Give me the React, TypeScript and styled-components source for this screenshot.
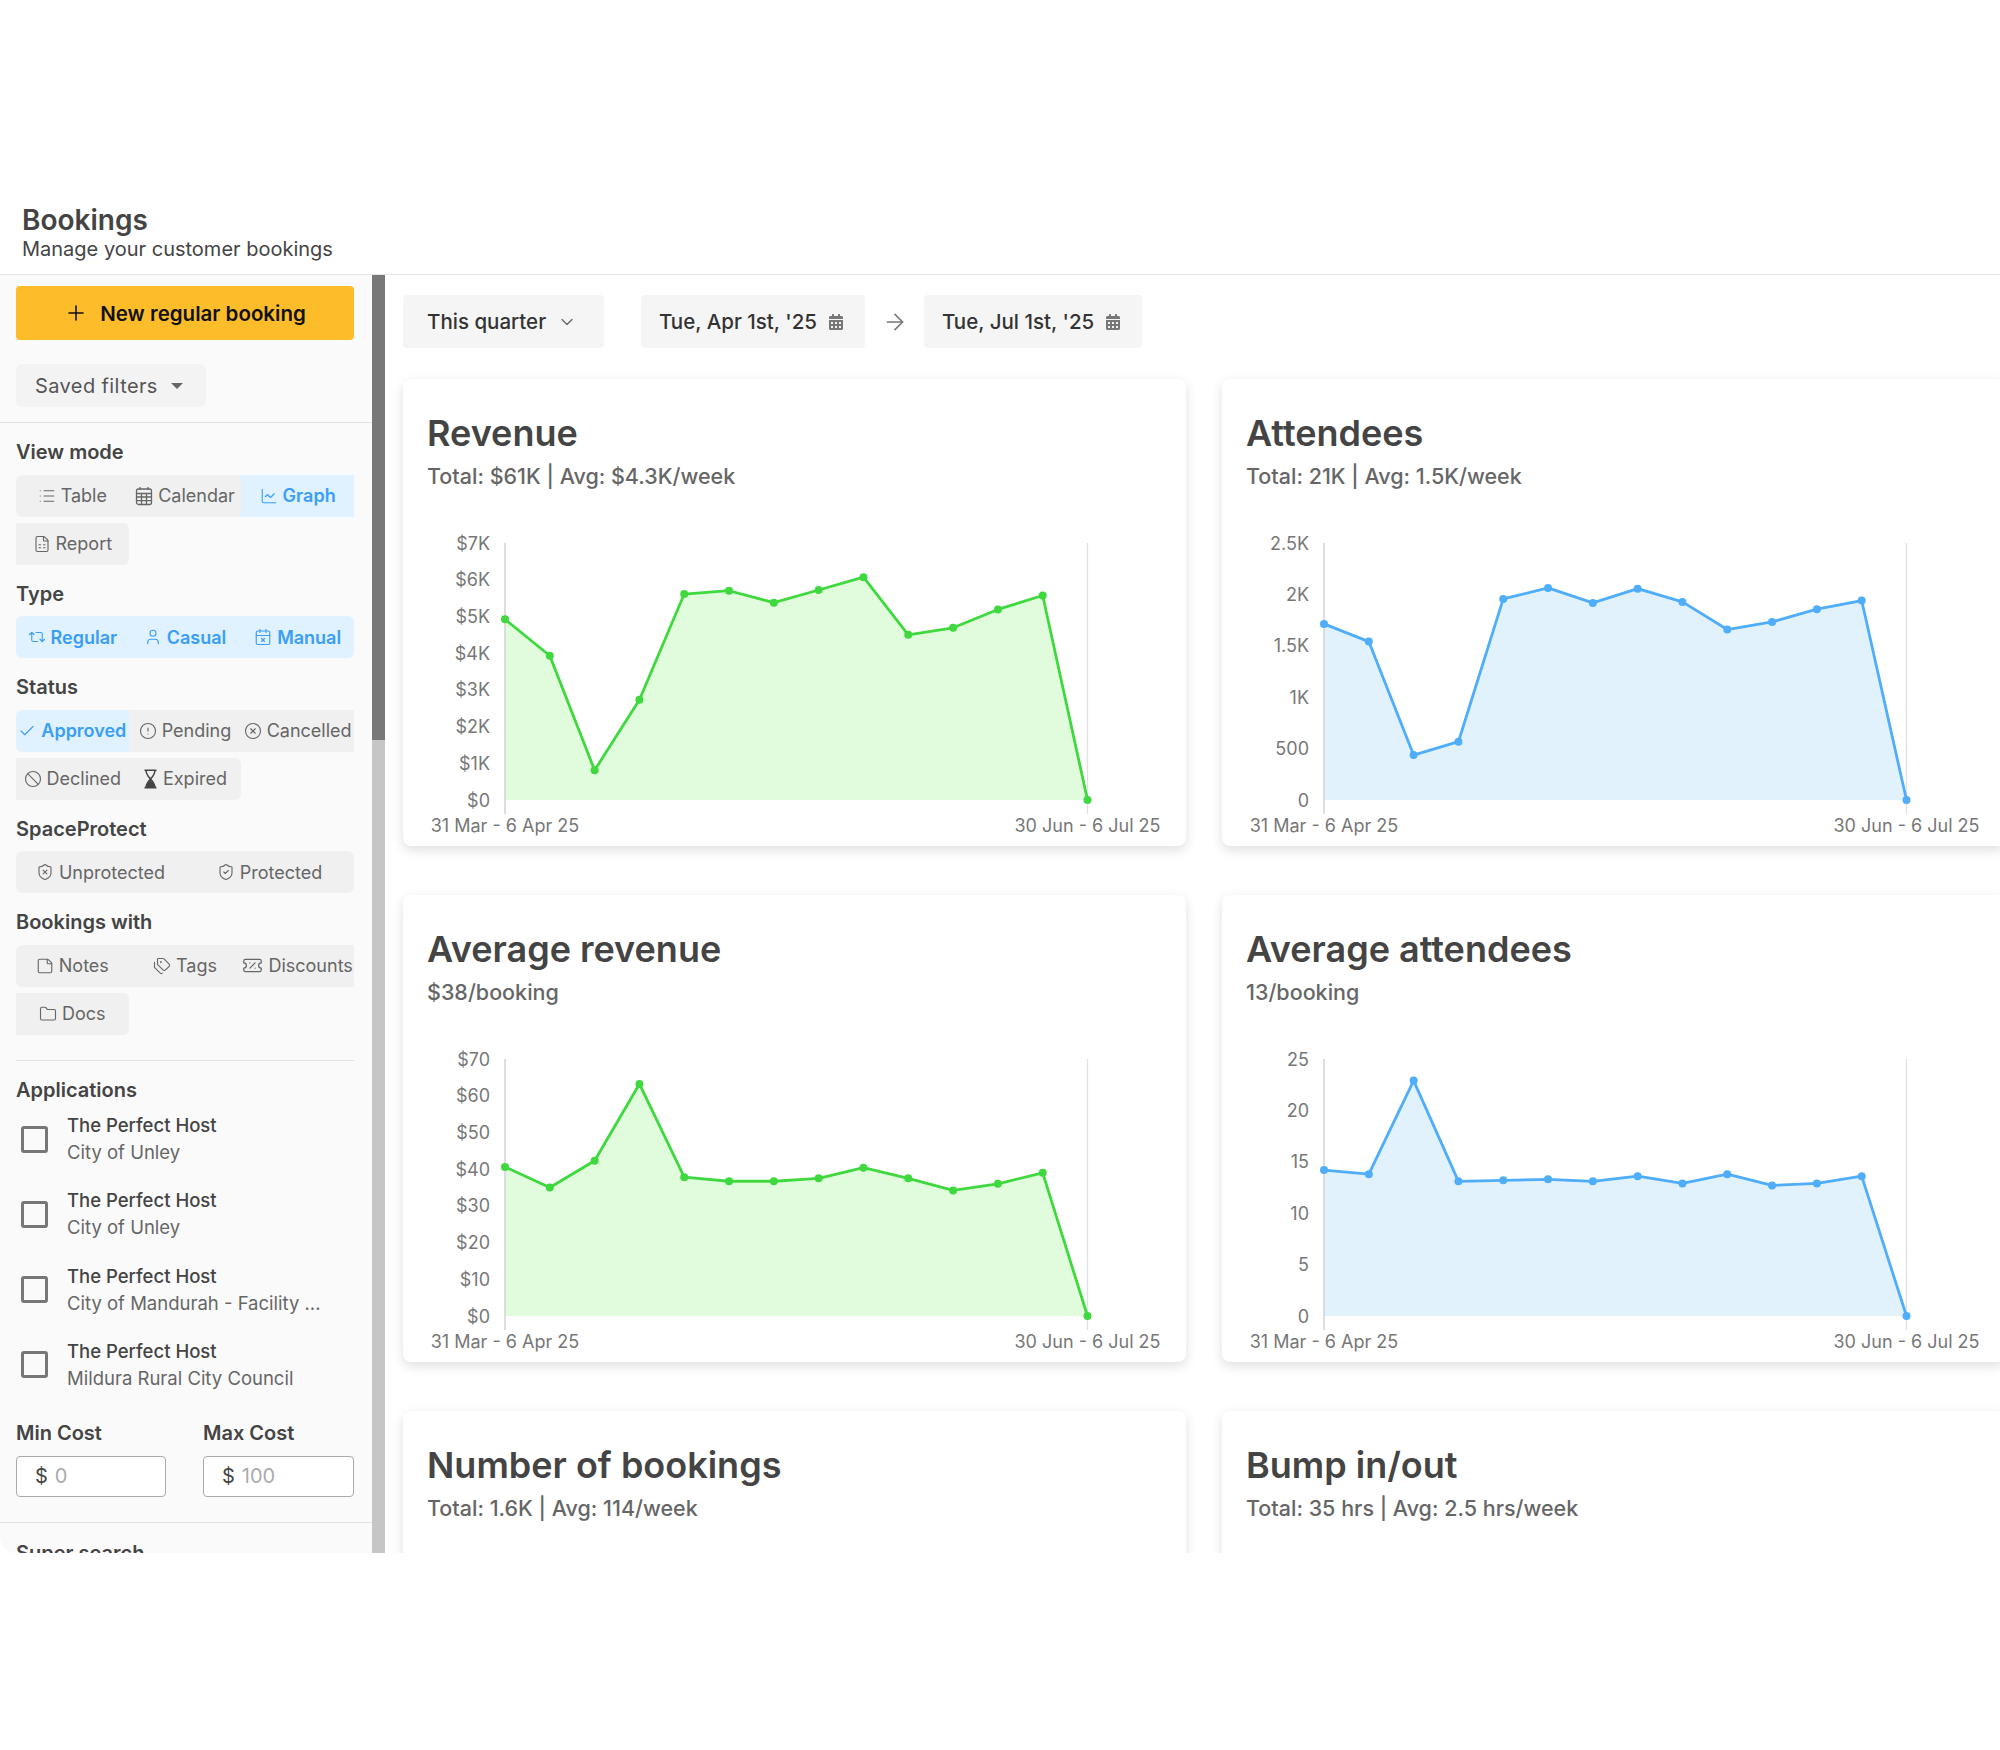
import React from "react";
import styled, { createGlobalStyle } from "styled-components";
import {
  Ban,
  ArrowRight,
  ChartLine,
  Check,
  ChevronDown,
  CircleAlert,
  CircleUserRound,
  CircleX,
  FileSpreadsheet,
  Folder,
  List,
  Plus,
  Repeat2,
  ShieldCheck,
  ShieldX,
  StickyNote,
  Tags,
  TicketPercent,
  User,
  CalendarX,
} from "lucide-react";
import { FaCalendarAlt } from "react-icons/fa";

const GlobalStyle = createGlobalStyle`
  html, body {
    margin: 0;
    background: #fff;
    font-family: Inter, "Liberation Sans", sans-serif;
    overflow: hidden;
  }
  * { box-sizing: border-box; }
`;

const Page = styled.div`
  width: 2000px;
  height: 1750px;
  padding-top: 200px;
  overflow: hidden;
`;

const Header = styled.header`
  height: 75px;
  padding: 4px 22px 0;
  border-bottom: 1px solid #e4e4e4;
`;

const PageTitle = styled.h1`
  margin: 0;
  font-size: 28px;
  line-height: 32px;
  font-weight: 600;
  color: #444;
`;

const PageSub = styled.div`
  font-size: 20px;
  line-height: 26px;
  color: #444;
`;

const Shell = styled.div`
  display: flex;
  height: 1278px;
  overflow: hidden;
`;

const Sidebar = styled.aside`
  width: 372px;
  flex: none;
  padding-top: 11px;
  background: #fafafa;
  border-bottom-left-radius: 16px;
  overflow: hidden;
`;

const Pad = styled.div`
  padding: 0 18px 0 16px;
`;

const NewButton = styled.button`
  display: flex;
  align-items: center;
  justify-content: center;
  gap: 12px;
  width: 100%;
  height: 54px;
  border: 0;
  border-radius: 4px;
  background: #fdbd2a;
  color: #111;
  font: 600 20.5px Inter, sans-serif;
`;

const SavedFilters = styled.button`
  display: flex;
  align-items: center;
  gap: 13px;
  width: 190px;
  height: 43px;
  margin-top: 24px;
  padding: 0 19px;
  border: 0;
  border-radius: 6px;
  background: #f3f3f3;
  color: #555;
  font: 400 20px Inter, sans-serif;
  letter-spacing: 0.4px;
`;

const Caret = styled.span`
  width: 0;
  height: 0;
  border-left: 6px solid transparent;
  border-right: 6px solid transparent;
  border-top: 6px solid #666;
`;

const Divider = styled.div<{ $inset?: boolean }>`
  height: 1px;
  background: #e2e2e2;
  margin: ${(p) => (p.$inset ? "25px 18px 0 16px" : "0")};
`;

const Group = styled.section`
  padding-top: 17px;
`;

const GroupLabel = styled.div`
  font-size: 20px;
  line-height: 24px;
  font-weight: 600;
  color: #444;
  margin-bottom: 10.5px;
`;

const Segments = styled.div`
  display: flex;
  flex-wrap: wrap;
  row-gap: 6px;
`;

const Segment = styled.div<{ $active?: boolean; $cols?: number }>`
  flex: 0 0 ${(p) => 100 / (p.$cols ?? 3)}%;
  display: flex;
  align-items: center;
  justify-content: center;
  gap: 5px;
  height: 42px;
  font-size: 18px;
  font-weight: ${(p) => (p.$active ? 600 : 400)};
  color: ${(p) => (p.$active ? "#3a9ef5" : "#666")};
  background: ${(p) => (p.$active ? "#e0f1ff" : "#f0f0f0")};
  white-space: nowrap;

  &:first-child {
    border-radius: 6px 0 0 6px;
  }
  &:last-child {
    border-radius: 0 6px 6px 0;
  }
  &:first-child:last-child {
    border-radius: 0 6px 6px 0;
  }
  svg {
    flex: none;
  }
`;

const AppRow = styled.div`
  display: flex;
  align-items: center;
  gap: 19px;
  padding-left: 5px;
  margin-bottom: 21.3px;
`;

const Box = styled.span`
  width: 27px;
  height: 27px;
  flex: none;
  border: 3px solid #777;
  border-radius: 3px;
`;

const AppText = styled.div`
  min-width: 0;
  font-size: 18.5px;
  line-height: 27px;
`;

const AppName = styled.div`
  font-weight: 500;
  color: #444;
`;

const AppPlace = styled.div`
  color: #666;
  white-space: nowrap;
`;

const CostRow = styled.div`
  display: grid;
  grid-template-columns: 150px 151px;
  justify-content: space-between;
  padding-top: 8px;
`;

const CostInput = styled.label`
  display: flex;
  align-items: center;
  gap: 7px;
  height: 41px;
  padding-left: 18px;
  border: 1px solid #aaa;
  border-radius: 4px;
  background: #fff;
  font-size: 20px;
  color: #444;

  input {
    width: 80px;
    padding: 0;
    border: 0;
    outline: 0;
    background: transparent;
    font: 400 20px Inter, sans-serif;
  }
  input::placeholder {
    color: #aaa;
  }
`;

const ClippedLabel = styled(GroupLabel)`
  padding: 18px 0 0 16px;
  margin: 0;
`;

const ScrollTrack = styled.div`
  width: 13px;
  flex: none;
  background: #c6c6c6;
`;

const ScrollThumb = styled.div`
  height: 465px;
  background: #787878;
`;

const Main = styled.main`
  flex: 1;
  min-width: 0;
  padding: 20px 0 0 18px;
  overflow: hidden;
`;

const Toolbar = styled.div`
  display: flex;
  align-items: center;
  height: 53px;
`;

const ToolButton = styled.div<{ $width: number }>`
  display: flex;
  align-items: center;
  width: ${(p) => p.$width}px;
  height: 53px;
  padding-left: ${(p) => (p.$width > 210 ? 18 : 24)}px;
  gap: 11px;
  border-radius: 4px;
  background: #f5f5f5;
  color: #333;
  font-size: 20.5px;
  font-weight: 500;
  white-space: nowrap;
`;

const ArrowSlot = styled.div`
  width: 59px;
  display: flex;
  justify-content: center;
  color: #777;
`;

const QuarterGap = styled.div`
  width: 37px;
`;

const CardGrid = styled.div`
  display: grid;
  grid-template-columns: 783px 783px;
  gap: 49px 36px;
  margin-top: 31px;
`;

const Card = styled.article`
  height: 467px;
  padding-top: 32px;
  border-radius: 8px;
  background: #fff;
  box-shadow: 0 4px 12px rgba(0, 0, 0, 0.13);
`;

const CardTitle = styled.h2`
  margin: 0;
  padding-left: 24px;
  font-size: 36px;
  line-height: 44px;
  font-weight: 600;
  color: #444;
`;

const CardSub = styled.div`
  margin-top: 7px;
  padding-left: 24px;
  font-size: 21.5px;
  line-height: 28px;
  font-weight: 500;
  color: #666;
`;

const ChartSvg = styled.svg`
  display: block;
`;

const AxisText = styled.text`
  font-family: Inter, sans-serif;
  font-size: 18px;
  fill: #777;
`;

type Chart = { ticks: string[]; max: number; color: string; fill: string; data: number[] };

const green = { color: "#3fd93f", fill: "#e0fcdc" };
const blue = { color: "#4fadfa", fill: "#e1f2fd" };

const cards: { title: string; sub: string; chart?: Chart }[] = [
  {
    title: "Revenue",
    sub: "Total: $61K | Avg: $4.3K/week",
    chart: {
      ...green,
      ticks: ["$0", "$1K", "$2K", "$3K", "$4K", "$5K", "$6K", "$7K"],
      max: 7,
      data: [4.92, 3.93, 0.81, 2.73, 5.61, 5.7, 5.375, 5.72, 6.07, 4.5, 4.69, 5.19, 5.57, 0],
    },
  },
  {
    title: "Attendees",
    sub: "Total: 21K | Avg: 1.5K/week",
    chart: {
      ...blue,
      ticks: ["0", "500", "1K", "1.5K", "2K", "2.5K"],
      max: 2500,
      data: [1713, 1541, 437, 567, 1956, 2063, 1917, 2056, 1927, 1658, 1732, 1856, 1940, 0],
    },
  },
  {
    title: "Average revenue",
    sub: "$38/booking",
    chart: {
      ...green,
      ticks: ["$0", "$10", "$20", "$30", "$40", "$50", "$60", "$70"],
      max: 70,
      data: [40.6, 35, 42.3, 63.2, 37.8, 36.7, 36.7, 37.5, 40.4, 37.5, 34.2, 36, 39, 0],
    },
  },
  {
    title: "Average attendees",
    sub: "13/booking",
    chart: {
      ...blue,
      ticks: ["0", "5", "10", "15", "20", "25"],
      max: 25,
      data: [14.2, 13.8, 22.9, 13.1, 13.2, 13.3, 13.1, 13.6, 12.9, 13.8, 12.7, 12.9, 13.6, 0],
    },
  },
  { title: "Number of bookings", sub: "Total: 1.6K | Avg: 114/week" },
  { title: "Bump in/out", sub: "Total: 35 hrs | Avg: 2.5 hrs/week" },
];

const LEFT = 102;
const RIGHT = 684.5;
const TOP = 53;
const BOTTOM = 310;

function LineChart({ chart }: { chart: Chart }) {
  const step = (RIGHT - LEFT) / (chart.data.length - 1);
  const pts = chart.data.map((v, i) => ({
    x: LEFT + i * step,
    y: BOTTOM - (v / chart.max) * (BOTTOM - TOP),
  }));
  const line = pts.map((p) => `${p.x},${p.y}`).join(" ");
  return (
    <ChartSvg width={783} height={356}>
      <polygon points={`${LEFT},${BOTTOM} ${line} ${RIGHT},${BOTTOM}`} fill={chart.fill} />
      <line x1={LEFT} x2={LEFT} y1={TOP} y2={324} stroke="#ccc" strokeWidth={1.3} />
      <line x1={RIGHT} x2={RIGHT} y1={TOP} y2={324} stroke="#e0e0e0" strokeWidth={1.3} />
      <polyline points={line} fill="none" stroke={chart.color} strokeWidth={2.8} strokeLinejoin="round" />
      {pts.map((p, i) => (
        <circle key={i} cx={p.x} cy={p.y} r={4} fill={chart.color} />
      ))}
      {chart.ticks.map((t, i) => (
        <AxisText
          key={t}
          x={87}
          y={BOTTOM - (i / (chart.ticks.length - 1)) * (BOTTOM - TOP)}
          textAnchor="end"
          dominantBaseline="central"
        >
          {t}
        </AxisText>
      ))}
      <AxisText x={LEFT} y={335} textAnchor="middle" dominantBaseline="central">
        31 Mar - 6 Apr 25
      </AxisText>
      <AxisText x={RIGHT} y={335} textAnchor="middle" dominantBaseline="central">
        30 Jun - 6 Jul 25
      </AxisText>
    </ChartSvg>
  );
}

function GridCalendar() {
  return (
    <svg width="18" height="20" viewBox="0 0 18 20" fill="none" stroke="currentColor" strokeWidth="1.3">
      <rect x="1.5" y="3" width="15" height="15.5" rx="2" />
      <path d="M5 1v3M13 1v3M1.5 7.5h15M1.5 11h15M1.5 14.7h15M6.5 7.5v11M11.5 7.5v11" />
    </svg>
  );
}

function FilledHourglass() {
  return (
    <svg width="15" height="20" viewBox="0 0 15 20" fill="none" stroke="#444" strokeWidth="1.5">
      <path d="M1.5 1.2h12M1.5 18.8h12M3 1.2c0 4 2 6 4.5 8.8C5 12.8 3 15 3 18.8M12 1.2c0 4-2 6-4.5 8.8 2.5 2.8 4.5 5 4.5 8.8" />
      <path d="M3 18.5c0-3 2-5.500 4.500-7 2.500 1.500 4.500 4 4.500 7z" fill="#444" stroke="none" />
    </svg>
  );
}

const ic = { size: 18, strokeWidth: 1.5 };

function App() {
  return (
    <Page>
      <GlobalStyle />
      <Header>
        <PageTitle>Bookings</PageTitle>
        <PageSub>Manage your customer bookings</PageSub>
      </Header>
      <Shell>
        <Sidebar>
          <Pad>
            <NewButton>
              <Plus size={24} strokeWidth={1.6} />
              New regular booking
            </NewButton>
            <SavedFilters>
              Saved filters
              <Caret />
            </SavedFilters>
          </Pad>
          <Divider style={{ marginTop: 15 }} />
          <Pad>
            <Group>
              <GroupLabel>View mode</GroupLabel>
              <Segments>
                <Segment><List {...ic} />Table</Segment>
                <Segment><GridCalendar />Calendar</Segment>
                <Segment $active><ChartLine {...ic} />Graph</Segment>
                <Segment><FileSpreadsheet {...ic} />Report</Segment>
              </Segments>
            </Group>
            <Group>
              <GroupLabel>Type</GroupLabel>
              <Segments>
                <Segment $active><Repeat2 {...ic} />Regular</Segment>
                <Segment $active><User {...ic} />Casual</Segment>
                <Segment $active><CalendarX {...ic} />Manual</Segment>
              </Segments>
            </Group>
            <Group>
              <GroupLabel>Status</GroupLabel>
              <Segments>
                <Segment $active><Check {...ic} />Approved</Segment>
                <Segment><CircleAlert {...ic} />Pending</Segment>
                <Segment><CircleX {...ic} />Cancelled</Segment>
                <Segment><Ban {...ic} />Declined</Segment>
                <Segment><FilledHourglass />Expired</Segment>
              </Segments>
            </Group>
            <Group>
              <GroupLabel>SpaceProtect</GroupLabel>
              <Segments>
                <Segment $cols={2}><ShieldX {...ic} />Unprotected</Segment>
                <Segment $cols={2}><ShieldCheck {...ic} />Protected</Segment>
              </Segments>
            </Group>
            <Group>
              <GroupLabel>Bookings with</GroupLabel>
              <Segments>
                <Segment><StickyNote {...ic} />Notes</Segment>
                <Segment><Tags {...ic} />Tags</Segment>
                <Segment><TicketPercent size={21} strokeWidth={1.4} />Discounts</Segment>
                <Segment><Folder {...ic} />Docs</Segment>
              </Segments>
            </Group>
          </Pad>
          <Divider $inset />
          <Pad>
            <Group>
              <GroupLabel>Applications</GroupLabel>
              <AppRow>
                <Box />
                <AppText>
                  <AppName>The Perfect Host</AppName>
                  <AppPlace>City of Unley</AppPlace>
                </AppText>
              </AppRow>
              <AppRow>
                <Box />
                <AppText>
                  <AppName>The Perfect Host</AppName>
                  <AppPlace>City of Unley</AppPlace>
                </AppText>
              </AppRow>
              <AppRow>
                <Box />
                <AppText>
                  <AppName>The Perfect Host</AppName>
                  <AppPlace>City of Mandurah - Facility ...</AppPlace>
                </AppText>
              </AppRow>
              <AppRow>
                <Box />
                <AppText>
                  <AppName>The Perfect Host</AppName>
                  <AppPlace>Mildura Rural City Council</AppPlace>
                </AppText>
              </AppRow>
            </Group>
            <CostRow>
              <div>
                <GroupLabel>Min Cost</GroupLabel>
                <CostInput>$<input placeholder="0" /></CostInput>
              </div>
              <div>
                <GroupLabel>Max Cost</GroupLabel>
                <CostInput>$<input placeholder="100" /></CostInput>
              </div>
            </CostRow>
          </Pad>
          <Divider style={{ marginTop: 25 }} />
          <ClippedLabel>Super search</ClippedLabel>
        </Sidebar>
        <ScrollTrack>
          <ScrollThumb />
        </ScrollTrack>
        <Main>
          <Toolbar>
            <ToolButton $width={201}>
              This quarter
              <ChevronDown size={20} strokeWidth={1.5} color="#666" />
            </ToolButton>
            <QuarterGap />
            <ToolButton $width={224}>
              Tue, Apr 1st, '25
              <FaCalendarAlt size={16} color="#777" />
            </ToolButton>
            <ArrowSlot>
              <ArrowRight size={26} strokeWidth={1.5} />
            </ArrowSlot>
            <ToolButton $width={218}>
              Tue, Jul 1st, '25
              <FaCalendarAlt size={16} color="#777" />
            </ToolButton>
          </Toolbar>
          <CardGrid>
            {cards.map((c) => (
              <Card key={c.title}>
                <CardTitle>{c.title}</CardTitle>
                <CardSub>{c.sub}</CardSub>
                {c.chart && <LineChart chart={c.chart} />}
              </Card>
            ))}
          </CardGrid>
        </Main>
      </Shell>
    </Page>
  );
}

export default App;
